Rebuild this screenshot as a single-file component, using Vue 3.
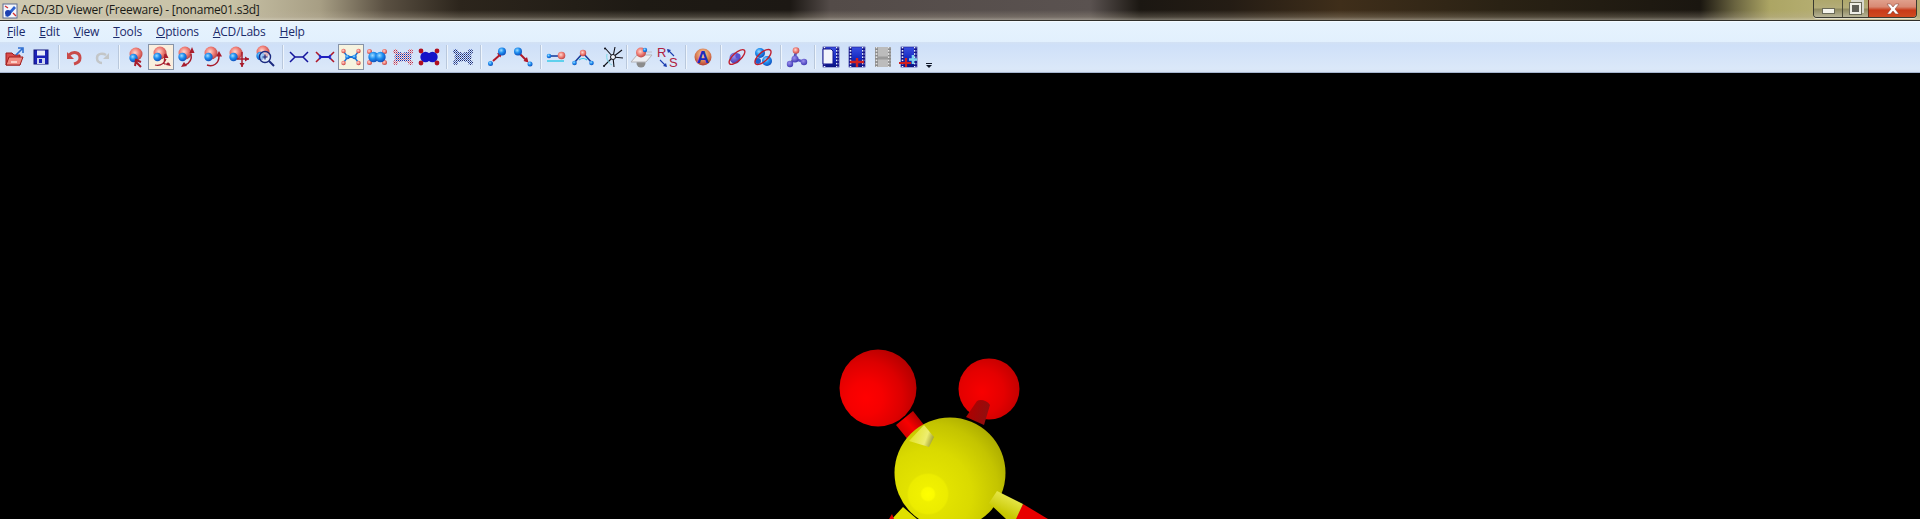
<script setup>
const menus = [
  { key: 'F', rest: 'ile' },
  { key: 'E', rest: 'dit' },
  { key: 'V', rest: 'iew' },
  { key: 'T', rest: 'ools' },
  { key: 'O', rest: 'ptions' },
  { key: 'A', rest: 'CD/Labs' },
  { key: 'H', rest: 'elp' },
]
</script>

<template>
  <div class="win">
    <header class="title">
      <svg class="appicon" viewBox="0 0 16 16">
        <rect x="1" y="1" width="14" height="14" fill="#f4f6fb" stroke="#5a6a92" />
        <path d="M3 13 12 3 14 5 6 14Z" fill="#2a5fd0" />
        <circle cx="6" cy="10" r="3" fill="#1c3fb0" />
        <path d="M3 3 6 5M11 10l3 3" stroke="#d03030" stroke-width="1.4" />
      </svg>
      <span class="title-text">ACD/3D Viewer (Freeware) - [noname01.s3d]</span>
      <div class="controls">
        <div class="ctl ctl-min"><i class="glyph-min"></i></div>
        <div class="ctl ctl-max"><i class="glyph-max"></i></div>
        <div class="ctl ctl-close">
          <svg width="14" height="12" viewBox="0 0 14 12">
            <path d="M1 1h3.500L7 4l2.500-3H13L9 6l4 5H9.500L7 8l-2.500 3H1l4-5Z" fill="#fff" stroke="#7a3a30" stroke-width=".5" />
          </svg>
        </div>
      </div>
    </header>

    <nav class="menu">
      <span v-for="m in menus" :key="m.key" class="menu-item"><u>{{ m.key }}</u>{{ m.rest }}</span>
    </nav>

    <div class="toolbar">
      <!-- open -->
      <div class="btn"><svg class="ic" viewBox="0 0 22 22">
        <path d="M2 7h6l2 2h6v10H2Z" fill="#d84a4a" stroke="#a01c1c" />
        <path d="M2 19 5 11h14l-3 8Z" fill="#f08a80" stroke="#a01c1c" />
        <rect x="7" y="15" width="6" height="2" fill="#fbd0c8" />
        <path d="M12 9 18 3M14 2h5v5" fill="none" stroke="#2f6fd0" stroke-width="1.6" />
      </svg></div>
      <!-- save -->
      <div class="btn"><svg class="ic" viewBox="0 0 22 22">
        <rect x="4" y="4" width="14" height="14" fill="#1c22b8" stroke="#12147c" />
        <rect x="7" y="4.500" width="8" height="5" fill="#e8ecf8" />
        <rect x="7" y="12" width="8" height="6" fill="#cfd6ef" />
        <rect x="9" y="13" width="3" height="4" fill="#1c22b8" />
      </svg></div>
      <div class="sep"></div>
      <!-- undo -->
      <div class="btn"><svg class="ic" viewBox="0 0 22 22">
        <path d="M5 9c4-4 11-3 11 3 0 3-2 5-6 6" fill="none" stroke="#c94a4a" stroke-width="3" />
        <path d="M3 6v7h7Z" fill="#c94a4a" />
      </svg></div>
      <!-- redo -->
      <div class="btn"><svg class="ic" viewBox="0 0 22 22">
        <path d="M16 9c-3-2-9-2-9 3 0 3 2 5 5 5" fill="none" stroke="#c3c6c8" stroke-width="2.500" />
        <path d="M19 7v6h-6Z" fill="#c3c6c8" />
      </svg></div>
      <div class="sep"></div>
      <!-- rotate group -->
      <div class="btn"><svg class="ic" viewBox="0 0 22 22">
        <use href="#pair" />
        <path d="M11 15 17 21M11 20l1-6 5 2" fill="none" stroke="#a81c2c" stroke-width="2" />
      </svg></div>
      <div class="btn on"><svg class="ic" viewBox="0 0 22 22">
        <use href="#pair" x="-2" y="-1" />
        <path d="M5 19c5 1 9-1 11-6M15 8l-1 10M14 18h6" fill="none" stroke="#a81c2c" stroke-width="1.200" />
        <path d="M16 7l-2.500 5h5ZM21 20l-5-1 2-3Z" fill="#a81c2c" />
      </svg></div>
      <div class="btn"><svg class="ic" viewBox="0 0 22 22">
        <use href="#pair" x="-3" y="-1" />
        <path d="M15 8c1 5-1 9-6 11" fill="none" stroke="#a81c2c" stroke-width="1.500" />
        <path d="M16 1l-2.500 6h5ZM5 21l6-1-3-4Z" fill="#a81c2c" />
      </svg></div>
      <div class="btn"><svg class="ic" viewBox="0 0 22 22">
        <use href="#pair" x="-3" y="-1" />
        <path d="M5 19c6 2 12-1 12-9" fill="none" stroke="#a81c2c" stroke-width="1.500" />
        <path d="M17 5l-3 5.500h6Z" fill="#a81c2c" />
      </svg></div>
      <div class="btn"><svg class="ic" viewBox="0 0 22 22">
        <use href="#pair" x="-4" y="-1" />
        <path d="M14 6v15M9 13h12" stroke="#a81c2c" stroke-width="1.500" />
        <path d="M14 21l-2.500-4h5ZM21 13l-4-2.500v5Z" fill="#a81c2c" />
      </svg></div>
      <div class="btn"><svg class="ic" viewBox="0 0 22 22">
        <use href="#pair" x="-3" y="-2" />
        <circle cx="11" cy="11" r="5.500" fill="#e6f0fa" fill-opacity=".6" stroke="#1c2a80" stroke-width="1.400" />
        <path d="M8.500 11h5M11 8.500v5" stroke="#1c2a80" stroke-width="1.200" />
        <path d="M15 15l5 5" stroke="#1c2a80" stroke-width="2" />
      </svg></div>
      <div class="sep"></div>
      <!-- display modes -->
      <div class="btn"><svg class="ic" viewBox="0 0 22 22">
        <path d="M7 11h8" stroke="#14149c" stroke-width="1.500" />
        <path d="M7 11 2 16M15 11l5 5M7 11 2 6M15 11l5-5" stroke="#14149c" stroke-width="1.500" />
      </svg></div>
      <div class="btn"><svg class="ic" viewBox="0 0 22 22">
        <path d="M7 11h8M7 11 5 9M7 11 5 13M15 11l2-2M15 11l2 2" stroke="#2020c0" stroke-width="2" />
        <path d="M5 9 2 6M5 13l-3 3M17 9l3-3M17 13l3 3" stroke="#b01828" stroke-width="1.600" />
      </svg></div>
      <div class="btn on on-b"><svg class="ic" viewBox="0 0 22 22">
        <path d="M8 11h6" stroke="#1c6fd0" stroke-width="2" />
        <path d="M7 10 4 6M7 12l-3 4M15 10l3-4M15 12l3 4" stroke="#1c6fd0" stroke-width="1.400" />
        <circle cx="7.500" cy="11" r="2.300" fill="url(#bb)" /><circle cx="14.500" cy="11" r="2.300" fill="url(#bb)" />
        <circle cx="3.500" cy="5" r="2.200" fill="url(#rb)" /><circle cx="18.500" cy="5" r="2.200" fill="url(#rb)" />
        <circle cx="3.500" cy="17" r="2.200" fill="url(#rb)" /><circle cx="18.500" cy="17" r="2.200" fill="url(#rb)" />
      </svg></div>
      <div class="btn"><svg class="ic" viewBox="0 0 22 22">
        <circle cx="3.500" cy="5.500" r="2.500" fill="url(#rb)" /><circle cx="18.500" cy="5.500" r="2.500" fill="url(#rb)" />
        <circle cx="3.500" cy="16.500" r="2.500" fill="url(#rb)" /><circle cx="18.500" cy="16.500" r="2.500" fill="url(#rb)" />
        <circle cx="7.500" cy="11" r="5.200" fill="url(#bb)" /><circle cx="14.500" cy="11" r="5.200" fill="url(#bb)" />
      </svg></div>
      <div class="btn"><svg class="ic" viewBox="0 0 22 22">
        <circle cx="3.500" cy="5.500" r="2.500" fill="url(#dr)" /><circle cx="18.500" cy="5.500" r="2.500" fill="url(#dr)" />
        <circle cx="3.500" cy="16.500" r="2.500" fill="url(#dr)" /><circle cx="18.500" cy="16.500" r="2.500" fill="url(#dr)" />
        <circle cx="7.500" cy="11" r="5" fill="url(#db)" /><circle cx="14.500" cy="11" r="5" fill="url(#db)" />
      </svg></div>
      <div class="btn"><svg class="ic" viewBox="0 0 22 22">
        <circle cx="7.500" cy="11" r="5.200" fill="#1414c8" /><circle cx="14.500" cy="11" r="5.200" fill="#1414c8" />
        <circle cx="3" cy="5" r="2.400" fill="#b01020" /><circle cx="19" cy="5" r="2.400" fill="#b01020" />
        <circle cx="3" cy="17" r="2.400" fill="#b01020" /><circle cx="19" cy="17" r="2.400" fill="#b01020" />
      </svg></div>
      <div class="sep"></div>
      <div class="btn"><svg class="ic" viewBox="0 0 22 22">
        <circle cx="3.500" cy="5.500" r="2.500" fill="url(#dn)" /><circle cx="18.500" cy="5.500" r="2.500" fill="url(#dn)" />
        <circle cx="3.500" cy="16.500" r="2.500" fill="url(#dn)" /><circle cx="18.500" cy="16.500" r="2.500" fill="url(#dn)" />
        <circle cx="7.500" cy="11" r="5" fill="url(#dn)" /><circle cx="14.500" cy="11" r="5" fill="url(#dn)" />
      </svg></div>
      <div class="sep"></div>
      <!-- bonds -->
      <div class="btn"><svg class="ic" viewBox="0 0 22 22">
        <path d="M7 15 15 8" stroke="#b01828" stroke-width="2" />
        <path d="M16 6l-5 1.500 3.500 4Z" fill="#b01828" />
        <circle cx="16" cy="5.500" r="4" fill="url(#bb)" /><circle cx="4.500" cy="17.500" r="2.500" fill="url(#bb)" />
      </svg></div>
      <div class="btn"><svg class="ic" viewBox="0 0 22 22">
        <path d="M7 7 15 15" stroke="#b01828" stroke-width="2" />
        <path d="M16.500 16.500l-5-1.500 3.500-4Z" fill="#b01828" />
        <circle cx="6" cy="5.500" r="4" fill="url(#bb)" /><circle cx="18" cy="18" r="2.500" fill="url(#bb)" />
      </svg></div>
      <div class="sep"></div>
      <div class="btn"><svg class="ic" viewBox="0 0 22 22">
        <path d="M3 10h16" stroke="#1c3f9c" stroke-width="1.600" />
        <path d="M1 15h17" stroke="#2cc8e8" stroke-width="1.400" />
        <circle cx="3" cy="10" r="2.300" fill="url(#bb)" />
        <circle cx="15.500" cy="9.500" r="3.800" fill="url(#rb)" />
      </svg></div>
      <div class="btn"><svg class="ic" viewBox="0 0 22 22">
        <path d="M7 14c2-2 6-2 8 0" fill="none" stroke="#30c8e8" stroke-width="1.200" />
        <path d="M2 17 11 7l9 10" fill="none" stroke="#1c3f9c" stroke-width="1.600" />
        <circle cx="11" cy="7" r="3.200" fill="url(#rb)" />
        <circle cx="2.500" cy="17" r="2.300" fill="url(#bb)" /><circle cx="19.500" cy="17" r="2.300" fill="url(#bb)" />
      </svg></div>
      <div class="btn star"><svg class="ic" viewBox="0 0 22 22">
        <path d="M11 11 3 2M11 11 13 1M11 11 20 4M11 11 21 12M11 11 12 21M11 11 2 20" stroke="#101018" stroke-width="1.100" />
        <path d="M5 8c-1 5 1 9 5 11" fill="none" stroke="#7ad8e8" stroke-width="1" />
        <circle cx="11" cy="11" r="2.500" fill="#eef2fa" stroke="#101018" />
        <circle cx="3" cy="2.500" r="1" fill="#101018" /><circle cx="2" cy="20" r="1" fill="#101018" />
      </svg></div>
      <div class="sep sep-thin"></div>
      <!-- plane, chirality -->
      <div class="btn"><svg class="ic" viewBox="0 0 22 22">
        <circle cx="10" cy="17" r="4.500" fill="#8c8c8c" />
        <path d="M6 9h15l-6 7H0Z" fill="#eceef2" stroke="#b4b4b8" />
        <path d="M13 6h8" stroke="#c0c0cc" />
        <circle cx="10" cy="6.500" r="5" fill="url(#rb)" /><circle cx="14" cy="4" r="2.200" fill="url(#bb)" />
      </svg></div>
      <div class="btn"><svg class="ic" viewBox="0 0 22 22">
        <text x="0" y="11" class="rs">R</text><text x="12" y="21" class="rs">S</text>
        <path d="M11 4l6 6M3 14l6 6" stroke="#1c3fb0" stroke-width="1.100" />
        <path d="M10 3l4 1-3 3ZM10 21l-4-1 3-3Z" fill="#1c3fb0" />
      </svg></div>
      <div class="sep sep-wide"></div>
      <!-- label -->
      <div class="btn"><svg class="ic" viewBox="0 0 22 22">
        <circle cx="11" cy="11" r="8.500" fill="url(#or)" />
        <text x="11" y="17" text-anchor="middle" class="abig">A</text>
      </svg></div>
      <div class="sep"></div>
      <!-- orbit -->
      <div class="btn"><svg class="ic" viewBox="0 0 22 22">
        <circle cx="9" cy="12" r="5.500" fill="url(#pu)" />
        <ellipse cx="11" cy="11" rx="10" ry="4" transform="rotate(-42 11 11)" fill="none" stroke="#c02030" stroke-width="1.300" />
        <circle cx="12" cy="10" r="2.500" fill="#5a50d0" />
      </svg></div>
      <div class="btn"><svg class="ic" viewBox="0 0 22 22">
        <circle cx="8" cy="7" r="5" fill="url(#bb)" /><circle cx="15" cy="15" r="5" fill="url(#bb)" />
        <circle cx="6" cy="15" r="3" fill="#1c60d0" />
        <ellipse cx="11" cy="11" rx="10" ry="4.500" transform="rotate(-42 11 11)" fill="none" stroke="#c02030" stroke-width="1.400" />
      </svg></div>
      <div class="sep"></div>
      <!-- molecule -->
      <div class="btn"><svg class="ic" viewBox="0 0 22 22">
        <path d="M10 5 9 13 4 18M9 13l9 3" stroke="#5a56c8" stroke-width="2.400" />
        <circle cx="10" cy="4.500" r="3.300" fill="url(#rb)" />
        <circle cx="9" cy="13" r="3.500" fill="url(#pu)" />
        <circle cx="4" cy="18" r="3.200" fill="url(#pu)" />
        <circle cx="18" cy="16" r="3.200" fill="url(#pu)" />
      </svg></div>
      <div class="sep"></div>
      <!-- film -->
      <div class="btn"><svg class="ic" viewBox="0 0 22 22">
        <use href="#film" />
        <path d="M3 3h8l2 2v13H3Z" fill="#f2f4fb" stroke="#14148c" />
      </svg></div>
      <div class="btn"><svg class="ic" viewBox="0 0 22 22">
        <use href="#film" />
        <path d="M11 12v9M4 16h14" stroke="#d02020" stroke-width="2.400" />
      </svg></div>
      <div class="btn"><svg class="ic" viewBox="0 0 22 22">
        <use href="#film-off" />
      </svg></div>
      <div class="btn"><svg class="ic" viewBox="0 0 22 22">
        <use href="#film" />
        <path d="M8 12v9M1 17h12" stroke="#d02020" stroke-width="2.200" />
        <path d="M15 9v9M11 13.500h8" stroke="#7fd4ee" stroke-width="2.600" />
      </svg></div>
      <div class="more"><i></i><b></b></div>
    </div>

    <main class="stage">
      <svg class="mol" viewBox="0 73 1920 446" preserveAspectRatio="none">
        <defs>
          <radialGradient id="rb" cx=".42" cy=".4" r=".65">
            <stop offset="0" stop-color="#ffd8d0" /><stop offset=".5" stop-color="#f08078" /><stop offset="1" stop-color="#b83c3c" />
          </radialGradient>
          <radialGradient id="bb" cx=".4" cy=".35" r=".7">
            <stop offset="0" stop-color="#a0dcff" /><stop offset=".45" stop-color="#2090f0" /><stop offset="1" stop-color="#0c48b8" />
          </radialGradient>
          <radialGradient id="or" cx=".5" cy=".35" r=".7">
            <stop offset="0" stop-color="#f8d8a8" /><stop offset=".6" stop-color="#d87a50" /><stop offset="1" stop-color="#a83030" />
          </radialGradient>
          <radialGradient id="pu" cx=".4" cy=".35" r=".7">
            <stop offset="0" stop-color="#9c90f0" /><stop offset="1" stop-color="#3a34b0" />
          </radialGradient>
          <pattern id="dn" width="2" height="2" patternUnits="userSpaceOnUse"><rect width="1" height="1" fill="#1c2868" /><rect x="1" y="1" width="1" height="1" fill="#4a64b8" /></pattern>
          <pattern id="dr" width="2" height="2" patternUnits="userSpaceOnUse"><rect width="1" height="1" fill="#c02840" /><rect x="1" y="1" width="1" height="1" fill="#e88890" /></pattern>
          <pattern id="db" width="2" height="2" patternUnits="userSpaceOnUse"><rect width="1" height="1" fill="#1c2ca0" /><rect x="1" y="1" width="1" height="1" fill="#c86880" /></pattern>
          <linearGradient id="fb" x1="0" y1="0" x2="0" y2="1">
            <stop offset="0" stop-color="#3a50e0" /><stop offset=".6" stop-color="#1428c0" /><stop offset="1" stop-color="#0a147c" />
          </linearGradient>
          <pattern id="perf" width="3" height="3.200" patternUnits="userSpaceOnUse"><rect width="3" height="3.200" fill="#14148c" /><rect x=".7" y=".8" width="1.600" height="1.600" fill="#e8f0fc" /></pattern>
          <pattern id="perfg" width="3" height="3.200" patternUnits="userSpaceOnUse"><rect width="3" height="3.200" fill="#8c8c8c" /><rect x=".7" y=".8" width="1.600" height="1.600" fill="#e6e6e6" /></pattern>
          <symbol id="pair" viewBox="0 0 22 22" overflow="visible">
            <circle cx="12" cy="8" r="6.500" fill="url(#rb)" />
            <circle cx="9.500" cy="12" r="4.200" fill="url(#bb)" />
          </symbol>
          <symbol id="film" viewBox="0 0 22 22" overflow="visible">
            <rect x="3" y="1" width="16" height="20" fill="url(#fb)" stroke="#14148c" stroke-width=".6" />
            <rect x="3" y="1" width="3" height="20" fill="url(#perf)" />
            <rect x="16" y="1" width="3" height="20" fill="url(#perf)" />
          </symbol>
          <symbol id="film-off" viewBox="0 0 22 22" overflow="visible">
            <rect x="3" y="1" width="16" height="20" fill="#bcbcbc" />
            <rect x="3" y="1" width="3" height="20" fill="url(#perfg)" />
            <rect x="16" y="1" width="3" height="20" fill="url(#perfg)" />
            <path d="M6 12h10" stroke="#9a9a9a" stroke-width="3" />
          </symbol>
          <radialGradient id="red1" gradientUnits="userSpaceOnUse" cx="866" cy="398" r="56">
            <stop offset="0" stop-color="#ff0000" /><stop offset=".3" stop-color="#f60000" /><stop offset=".65" stop-color="#dc0000" /><stop offset="1" stop-color="#b00000" />
          </radialGradient>
          <radialGradient id="red2" gradientUnits="userSpaceOnUse" cx="982" cy="392" r="44">
            <stop offset="0" stop-color="#f80000" /><stop offset=".5" stop-color="#e40000" /><stop offset="1" stop-color="#b80000" />
          </radialGradient>
          <radialGradient id="yel" gradientUnits="userSpaceOnUse" cx="928" cy="494" r="88">
            <stop offset="0" stop-color="#ffff00" /><stop offset=".07" stop-color="#fbfb00" /><stop offset=".09" stop-color="#f0f000" />
            <stop offset=".22" stop-color="#ecec00" /><stop offset=".24" stop-color="#e2e200" /><stop offset=".5" stop-color="#dada00" />
            <stop offset=".8" stop-color="#c4c400" /><stop offset="1" stop-color="#aaaa00" />
          </radialGradient>
          <linearGradient id="bondr" gradientUnits="userSpaceOnUse" x1="902" y1="432" x2="918" y2="418">
            <stop offset="0" stop-color="#d80000" /><stop offset=".5" stop-color="#f80000" /><stop offset="1" stop-color="#b80000" />
          </linearGradient>
          <linearGradient id="bondd" gradientUnits="userSpaceOnUse" x1="968" y1="410" x2="990" y2="416">
            <stop offset="0" stop-color="#b00000" /><stop offset="1" stop-color="#8c1010" />
          </linearGradient>
          <linearGradient id="stub" gradientUnits="userSpaceOnUse" x1="912" y1="436" x2="934" y2="444">
            <stop offset="0" stop-color="#e4e430" /><stop offset=".6" stop-color="#eeee70" /><stop offset="1" stop-color="#8a8a28" />
          </linearGradient>
          <linearGradient id="stub2" gradientUnits="userSpaceOnUse" x1="1010" y1="490" x2="1000" y2="512">
            <stop offset="0" stop-color="#f0f060" /><stop offset="1" stop-color="#c8c800" />
          </linearGradient>
        </defs>
        <circle cx="989" cy="389" r="30.500" fill="url(#red2)" />
        <path d="M977 401c3-2 10-1 13 4l-6 20-18-8Z" fill="url(#bondd)" />
        <circle cx="878" cy="388" r="38.500" fill="url(#red1)" />
        <path d="M896 425 913 411 924 425 909 441Z" fill="url(#bondr)" />
        <path d="M903 507 892 519H917Z" fill="#e0e000" />
        <path d="M892 514 889 519H894Z" fill="#e00000" />
        <path d="M1023 504 1048 519H1015Z" fill="#e80000" />
        <circle cx="950" cy="473" r="55.500" fill="url(#yel)" />
        <path d="M997 491 1023 504 1016 519 1006 519 989 503Z" fill="url(#stub2)" />
        <path d="M924 425 934 437 929 447 909 441Z" fill="url(#stub)" />
      </svg>
    </main>
  </div>
</template>

<style scoped>
.win {
  display: flex;
  flex-direction: column;
  width: 1920px;
  height: 519px;
  overflow: hidden;
  background: #000;
}
.title {
  display: flex;
  align-items: flex-start;
  height: 20px;
  flex: none;
  border-bottom: 1px solid #2e2e2a;
  background:
    linear-gradient(180deg, rgba(0, 0, 0, 0) 0, rgba(0, 0, 0, 0) 50%, rgba(190, 180, 160, .28) 85%, rgba(220, 215, 200, .5) 100%),
    linear-gradient(90deg, #cfc9b2 0, #c8c2a6 230px, #a79e84 320px, #5a5042 385px, #2c251c 460px, #1e1a14 640px, #1c1814 790px, #534b48 830px, #5a5250 1090px, #1b1712 1140px, #241c14 1230px, #3f2e1a 1340px, #2a2214 1500px, #1a1610 1700px, #6a6440 1735px, #aca564 1770px, #b4ad70 1813px, #b4ad70 1920px);
}
.appicon {
  width: 16px;
  height: 16px;
  margin: 3px 0 0 2px;
  flex: none;
}
.title-text {
  margin: 2px 0 0 3px;
  font: 12px/16px "Open Sans", "Noto Sans", sans-serif;
  letter-spacing: -.24px;
  color: #1a1a16;
  white-space: nowrap;
}
.controls {
  display: flex;
  margin-left: auto;
  margin-right: 3px;
  height: 17px;
  border: 1px solid #3a3a30;
  border-top: 0;
  border-radius: 0 0 4px 4px;
  box-shadow: 0 1px 0 rgba(255, 255, 255, .55);
  overflow: hidden;
}
.ctl {
  display: flex;
  align-items: center;
  justify-content: center;
}
.ctl-min {
  width: 28px;
  background: linear-gradient(180deg, #aea76c 0, #b3ac78 45%, #8f8a60 55%, #b8b498 100%);
  border-right: 1px solid #4a4a38;
}
.glyph-min {
  display: block;
  width: 11px;
  height: 4px;
  margin-top: 4px;
  background: #f4f4ec;
  box-shadow: 0 0 0 1px #6a6a58;
}
.ctl-max {
  width: 25px;
  background: linear-gradient(180deg, #aea76c 0, #b3ac78 45%, #8f8a60 55%, #b8b498 100%);
  border-right: 1px solid #6a2a18;
}
.glyph-max {
  display: block;
  width: 7px;
  height: 7px;
  border: 2px solid #eeeee6;
  background: #5f5f58;
  box-shadow: 0 0 0 1px #6a6a58, 2px -2px 0 1px #d8d8ce;
}
.ctl-close {
  width: 47px;
  background: linear-gradient(180deg, #e0a08c 0, #d88a74 40%, #c83a18 60%, #d04a20 100%);
}
.menu {
  display: flex;
  align-items: center;
  flex: none;
  height: 20px;
  border-top: 1px solid #f4faff;
  background: linear-gradient(180deg, #e6f3fe 0, #e2f0fd 100%);
}
.menu-item {
  padding: 0 7px;
  font: 12px/20px "Open Sans", "Noto Sans", sans-serif;
  letter-spacing: -.2px;
  color: #1b2a6a;
  white-space: nowrap;
}
.toolbar {
  display: flex;
  align-items: center;
  flex: none;
  height: 30px;
  padding-left: 2px;
  border-bottom: 1px solid #a6b6d0;
  background: linear-gradient(180deg, #d3e2f4 0, #cfe0f8 10%, #dbe8f9 90%, #d6e2f2 100%);
}
.btn {
  display: flex;
  align-items: center;
  justify-content: center;
  width: 26px;
  height: 26px;
  flex: none;
  box-sizing: border-box;
}
.btn.on {
  border: 1px solid #8794a8;
  background: #f9eede;
}
.btn.on-b {
  background: #f6f3df;
}
.btn.star {
  margin-left: 4px;
}
.ic {
  width: 22px;
  height: 22px;
  overflow: visible;
  flex: none;
}
.sep {
  position: relative;
  width: 8px;
  height: 24px;
  flex: none;
}
.sep::after {
  content: "";
  position: absolute;
  left: 4px;
  top: 0;
  bottom: 0;
  width: 1px;
  background: #b9c8dc;
  box-shadow: 1px 0 0 #eef5fd;
}
.sep-thin {
  width: 3px;
}
.sep-thin::after {
  left: 0;
}
.sep-wide {
  width: 9px;
}
.rs {
  font: 13px "Liberation Sans", sans-serif;
  fill: #b02040;
}
.abig {
  font: bold 17px "Liberation Sans", sans-serif;
  fill: #1c2cc0;
}
.more {
  display: flex;
  flex-direction: column;
  align-items: center;
  align-self: flex-end;
  gap: 1px;
  width: 14px;
  margin-bottom: 4px;
}
.more i {
  display: block;
  width: 6px;
  height: 1px;
  background: #101828;
}
.more b {
  display: block;
  width: 0;
  height: 0;
  border: 3px solid transparent;
  border-top: 3px solid #101828;
  border-bottom: 0;
}
.stage {
  flex: 1;
  min-height: 0;
  background: #000;
}
.mol {
  display: block;
  width: 100%;
  height: 100%;
}
</style>
